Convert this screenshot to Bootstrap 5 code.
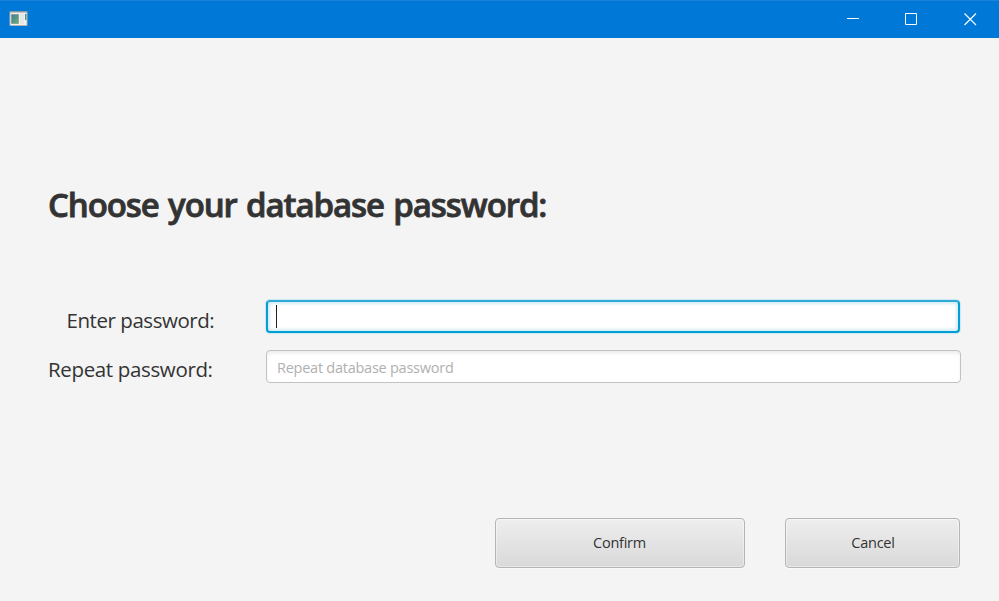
<!DOCTYPE html>
<html lang="en">
<head>
<meta charset="utf-8">
<meta name="viewport" content="width=device-width, initial-scale=1">
<title>Database password</title>
<link href="https://cdn.jsdelivr.net/npm/bootstrap@5.3.0/dist/css/bootstrap.min.css" rel="stylesheet">
<style>
body{background:#f4f4f4;color:#333;font-family:"Open Sans","Noto Sans",sans-serif;font-size:15px;height:601px;overflow:hidden}
.titlebar{height:38px;background:#0078d7;border-top:1px solid #1a83d9;padding-left:9px;padding-right:22px}
.win-controls{gap:45px}
.win-controls svg,.app-icon{display:block}
.app-icon{margin-bottom:2px}
.content-area{padding:144px 39px 33px 48px}
.heading{font-size:33px;line-height:46px;font-weight:600;letter-spacing:-1.08px;word-spacing:1.8px;color:#333;height:46px;-webkit-text-stroke:.8px #333}
.fields{margin-top:72px}
.field-row{height:50px}
.field-label{width:218px;font-size:20.5px;line-height:32px;letter-spacing:-.45px;padding-top:4px}
.label-indent{padding-left:18.5px}
.label-raised{padding-top:3px;letter-spacing:-.35px}
.entry{height:33px;padding:0 9px;border-radius:4px;font-size:14.5px;letter-spacing:-.25px;background:#fff}
.entry.focused{border:2px solid #039ed3;border-top-color:#2fa9d6;padding-left:8px;box-shadow:0 0 1px 1px #cbe8f2,inset 0 0 3px 2px #d3ecf4}
.entry.plain{border:1px solid #c2c2c2;margin-right:-1px;padding:2px 10px 0;box-shadow:inset 0 3px 4px -1px #e9e9e9}
.entry::placeholder{color:#b0b0b0;opacity:1}
.caret{width:1px;height:23px;background:#222}
.actions{gap:40px}
.btn.action{height:50px;border:1px solid #b5b5b5;border-radius:4px;background:linear-gradient(#eee,#d9d9d9);box-shadow:inset 0 0 0 1px rgba(255,255,255,.4),0 1px 0 #fafafa;color:#333;font-size:14.5px;letter-spacing:-.25px;padding:0 1px 0 0}
.confirm{width:250px}
.btn.cancel{width:175px;padding:0 0 0 1px}
</style>
</head>
<body class="d-flex flex-column">
<header class="titlebar d-flex align-items-center justify-content-between flex-shrink-0">
  <svg class="app-icon" width="19" height="15" viewBox="0 0 19 15" aria-hidden="true">
    <defs><linearGradient id="screen" x1="0" y1="0" x2="1" y2="1"><stop offset="0" stop-color="#4478a0"/><stop offset="1" stop-color="#62b56b"/></linearGradient></defs>
    <path fill="#f1f1f1" stroke="#b4b4b4" d="M1 .5h17v14H1z"/>
    <path fill="#8e979c" d="M1 0h17v1.5H1z"/>
    <path fill="url(#screen)" stroke="#7e8b88" stroke-width=".6" d="M2.5 3.5h7v9h-7z"/>
    <path fill="#e6e6e6" d="M11 3h4v10h-4z"/><path fill="url(#screen)" d="M16 3h1.5v6H16z"/>
  </svg>
  <div class="win-controls d-flex align-items-center">
    <svg width="13" height="13" viewBox="0 0 13 13" aria-label="Minimize"><path fill="#fff" d="M0 5h12v1H0z"/></svg>
    <svg width="14" height="13" viewBox="0 0 14 13" aria-label="Maximize"><path fill="none" stroke="#fff" d="M.5.5h11v11H.5z"/></svg>
    <svg width="13" height="13" viewBox="0 0 13 13" aria-label="Close"><path stroke="#fff" stroke-width="1.1" d="M.5.5l11.5 11.5M12 .5L.5 12"/></svg>
  </div>
</header>
<main class="content-area d-flex flex-column flex-grow-1">
  <h1 class="heading mb-0 text-nowrap"><span>Choose your database password:</span></h1>
  <div class="fields">
    <div class="field-row d-flex">
      <div class="field-label label-indent flex-shrink-0"><span>Enter password:</span></div>
      <div class="entry focused form-control d-flex align-items-center" role="textbox"><span class="caret"></span></div>
    </div>
    <div class="field-row d-flex">
      <label class="field-label label-raised flex-shrink-0" for="repeat"><span>Repeat password:</span></label>
      <input id="repeat" type="password" class="entry plain form-control" placeholder="Repeat database password">
    </div>
  </div>
  <div class="actions d-flex justify-content-end mt-auto">
    <button type="button" class="btn action confirm"><span>Confirm</span></button>
    <button type="button" class="btn action cancel"><span>Cancel</span></button>
  </div>
</main>
<script src="https://cdn.jsdelivr.net/npm/bootstrap@5.3.0/dist/js/bootstrap.bundle.min.js"></script>
</body>
</html>
